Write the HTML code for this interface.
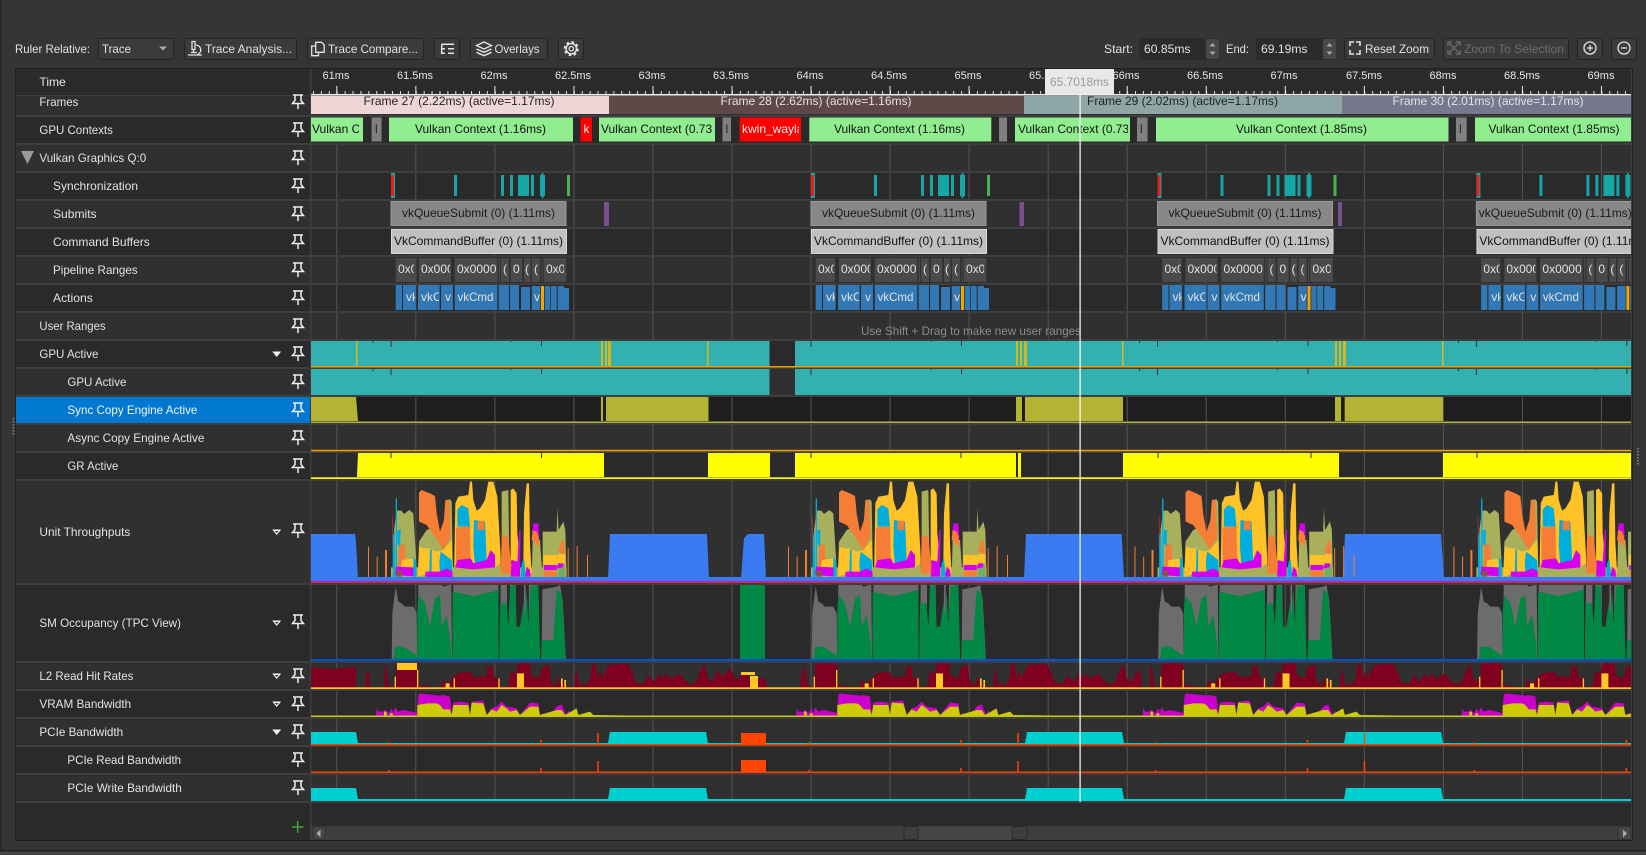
<!DOCTYPE html>
<html lang="en"><head><meta charset="utf-8"><title>Nsight Graphics Trace</title>
<style>
html,body{margin:0;padding:0;background:#353535;width:1646px;height:855px;overflow:hidden}
svg{display:block}
text{font-family:"Liberation Sans",sans-serif;font-size:12px;fill:#e2e2e2}
.d{fill:#111}.b{fill:#eee}.w{fill:#ddd}
.r{font-size:11px;fill:#e8e8e8;text-anchor:middle}
</style></head><body>
<svg xmlns="http://www.w3.org/2000/svg" width="1646" height="855" viewBox="0 0 1646 855">
<defs>
<g id="pin" fill="none" stroke="#eee" stroke-width="1.500"><path d="M-5-7H5M-3-7V-1.500L-5.500 1.500H5.500L3-1.500V-7M0 1.500V7"/></g>
<g id="tri"><path d="M-4.500-2.500H4.500L0 3Z" fill="#eee"/></g>
<g id="tro"><path d="M-4.500-2.500H4.500L0 3Z" fill="#eee"/><path d="M-1.800-1H1.800L0 1Z" fill="#2c2c2c"/></g>
<g id="not"><path d="M373 341v2M391 341v6M541.500 341v5M511 341v1" stroke="#333" fill="none"/></g>
<g id="syn">
<rect x="391" y="173" width="4" height="25" fill="#17a5a5"/><rect x="391" y="175" width="3" height="21" fill="#e52222"/>
<path d="M454 175h3v21h-3zM501 175h3v21h-3zM510 175h3v21h-3zM518 175h11v21h-11zM531 175h3v21h-3zM540 175h5v21h-5zM541.500 173h2v25h-2z" fill="#17a5a5"/>
<rect x="567" y="175" width="3" height="21" fill="#4caf50"/>
</g>
<g id="box">
<rect x="391" y="201.500" width="175" height="24" fill="#888" stroke="#9a9a9a"/>
<rect x="391.500" y="229.500" width="175" height="24" fill="#c0c0c0" stroke="#d8d8d8"/>
<path d="M395.700 258h19.300v24h-19.300zM419 258h32v24h-32zM454.700 258h42.600v24h-42.600zM498.700 258h1.300v24h-1.300zM501 258h8v24h-8zM510.700 258h11.600v24h-11.600zM524 258h6.700v24h-6.700zM532 258h8v24h-8zM541.500 258h1v24h-1zM543.700 258h22.600v24h-22.600z" fill="#4a4a4a"/>
<path d="M395.700 285h6.300v25h-6.300zM403 285h12.700v25h-12.700zM418 285h21.700v25h-21.700zM441 285h12v25h-12zM454.700 285h42.600v25h-42.600zM498.700 285h10.300v25h-10.300zM510 285h9v25h-9zM521 287h9v23h-9zM531.700 286h8.600v24h-8.600zM544.700 286h5.300v24h-5.300zM550.700 286h6v24h-6zM557.700 286h6.300v24h-6.300zM564 288h5v22h-5z" fill="#3278b4"/>
<rect x="541" y="286" width="3" height="24" fill="#f5a500"/>
</g>
<g id="ut" transform="translate(380 480) scale(.33333)">
<rect x="33" y="262" width="527" height="38" fill="#a8b05c"/>
<g fill="#f57d35"><rect x="-36" y="200" width="3" height="100"/><rect x="-10" y="230" width="3" height="70"/><rect x="563" y="205" width="3" height="90"/><rect x="590" y="198" width="3" height="95"/><rect x="621" y="225" width="3" height="70"/><rect x="15" y="210" width="6" height="90"/></g>
<polygon fill="#a8b05c" points="38,300 42,150 50,92 64,92 72,102 88,90 100,100 106,200 112,300"/>
<rect x="47" y="55" width="4" height="245" fill="#00aede"/>
<polygon fill="#00aede" points="38,300 38,170 44,150 46,300"/><rect x="37" y="110" width="2" height="90" fill="#d03030"/>
<polygon fill="#f57d35" points="55,260 58,190 75,195 78,260"/><polygon fill="#00aede" points="52,150 62,150 60,200 52,190"/>
<polygon fill="#ffc328" points="62,270 66,240 105,235 108,270"/><polygon fill="#d400f0" points="45,285 48,260 100,262 108,290"/>
<rect x="50" y="272" width="15" height="18" fill="#7f5a3c"/><polygon fill="#00aede" points="100,230 108,240 110,290 100,290"/>
<polygon fill="#a8b05c" points="113,300 117,185 140,150 165,140 188,180 196,60 210,58 215,65 218,230 220,300"/>
<polygon fill="#f57d35" points="117,38 125,30 150,40 165,48 170,100 180,155 192,120 197,60 208,60 212,170 190,210 165,170 140,135 117,125"/>
<polygon fill="#ffc328" points="113,290 118,200 135,205 150,205 170,215 190,210 215,180 218,270 150,280"/>
<polygon fill="#00aede" points="150,208 155,208 155,280 148,280"/><polygon fill="#00aede" points="178,245 182,215 215,240 217,275 180,280"/>
<polygon fill="#d400f0" points="135,290 137,275 180,275 200,265 217,275 218,295"/>
<polygon fill="#ffc328" points="222,300 226,70 235,50 265,45 270,5 276,5 280,60 290,92 300,85 315,60 325,5 340,5 352,50 356,120 362,230 362,300"/>
<polygon fill="#00aede" points="232,88 245,75 265,85 270,140 232,140"/><polygon fill="#f57d35" points="228,142 270,140 272,235 228,245"/>
<polygon fill="#00aede" points="282,120 315,125 320,240 285,255 280,200"/><polygon fill="#f57d35" points="292,124 312,122 313,150 292,150"/>
<polygon fill="#d400f0" points="225,262 232,240 272,235 280,250 320,240 332,210 345,225 345,262 280,270"/>
<polygon fill="#a8b05c" points="222,262 280,268 345,262 362,250 362,300 222,300"/>
<polygon fill="#a8b05c" points="365,300 365,35 385,30 388,230 392,300"/><polygon fill="#f57d35" points="362,280 365,165 385,170 392,240 400,280"/>
<polygon fill="#ffc328" points="392,240 392,30 400,25 410,40 412,160 420,240 410,280"/><polygon fill="#d400f0" points="392,290 395,240 412,245 418,150 422,150 420,290"/>
<polygon fill="#ffc328" points="430,240 432,100 440,10 447,10 450,190 455,280 430,290"/><polygon fill="#00aede" points="422,290 425,250 432,235 438,290"/><polygon fill="#d400f0" points="435,290 440,260 450,270 452,290"/>
<polygon fill="#a8b05c" points="455,300 458,180 480,180 488,300"/><polygon fill="#f57d35" points="455,180 458,148 475,150 478,200"/><polygon fill="#d400f0" points="458,150 460,130 475,130 478,175 470,155"/>
<polygon fill="#a8b05c" points="488,300 488,155 530,155 532,85 536,150 550,125 556,150 560,300"/>
<polygon fill="#ffc328" points="490,255 490,225 532,225 532,255"/><polygon fill="#d400f0" points="492,270 492,255 530,255 530,270"/><polygon fill="#f57d35" points="490,290 492,272 530,272 530,290"/>
<polygon fill="#f57d35" points="534,215 545,180 552,185 555,225"/><polygon fill="#ffc328" points="530,250 535,222 555,222 555,250"/><polygon fill="#d400f0" points="530,265 535,250 550,250 550,265"/><polygon fill="#74ae62" points="533,295 535,265 555,260 557,295"/>
</g>
<g id="sm" transform="translate(780 470) scale(.33333)">
<g fill="#6c6c6c">
<polygon points="95,570 97,430 107,350 115,395 125,400 135,410 160,410 170,430 172,570"/>
<polygon points="172,570 175,345 245,345 250,350 268,345 274,345 276,570"/>
<polygon points="278,570 280,345 415,345 415,570"/><polygon points="420,570 422,345 441,345 441,570"/><polygon points="450,570 450,345 467,345 470,570"/>
<polygon points="490,570 492,345 497,345 499,570"/><polygon points="505,570 507,345 535,345 540,570"/><polygon points="545,570 547,358 590,350 600,345 608,390 618,570"/>
</g>
<g fill="#008844">
<polygon points="100,570 105,530 130,530 160,550 170,555 170,570"/>
<polygon points="172,570 172,430 175,375 195,400 210,470 225,385 240,375 245,470 260,435 272,520 275,570"/>
<polygon points="277,570 278,365 340,378 415,360 416,570"/>
<polygon points="418,570 420,400 440,400 445,470 450,350 465,345 470,470 480,470 490,400 495,440 500,360 505,460 512,350 535,345 540,570"/>
<polygon points="543,570 545,510 580,510 590,360 605,370 618,570"/>
</g>
</g>
<g id="l2" transform="translate(780 650) scale(.33333)">
<polygon fill="#80001f" points="70,115 70,55 75,45 80,80 85,110 100,110 104,90 105,50 110,40 170,40 170,100 175,100 180,108 205,108 212,112 240,112 245,85 255,100 265,100 270,85 278,85 282,75 300,67 330,65 332,80 375,80 378,50 395,50 398,80 412,85 415,110 442,110 445,85 450,62 465,70 470,40 508,40 510,75 535,85 540,60 545,50 565,45 568,90 585,110 590,75 600,110 605,85 615,110 640,110 645,50 655,100 660,110 668,95 672,110 688,85 692,45 705,40 708,85 718,60 725,85 735,60 745,45 800,40 815,70 825,100 850,100 860,75 870,85 880,95 895,70 905,85 915,70 930,85 955,70 975,95 990,105 1005,95 1020,60 1030,40 1040,85 1055,95 1070,60 1085,80 1085,115"/>
<path d="M101 115V80h4v35zM168 115V60h4v55zM254 115v-15h12v15zM278 115V85h4v30zM412 115V85h4v30zM468 115V70h21v45zM600 115V85h5v30zM610 115V90h5v25z" fill="#ffc820"/>
</g>
<g id="vr" transform="translate(780 650) scale(.33333)">
<polygon fill="#cc00cc" points="48,200 50,175 56,185 70,185 75,178 85,190 95,175 100,190 105,172 115,185 130,180 165,187 170,190 175,135 180,130 240,137 250,135 270,140 275,190 280,158 300,155 325,158 330,195 335,155 370,152 380,195 395,175 410,170 425,155 440,170 470,175 480,195 510,158 535,160 540,195 550,190 570,195 590,170 605,163 612,180 620,195 625,180 630,200"/>
<polygon fill="#cccc00" points="172,200 172,165 200,160 230,160 240,165 250,178 270,178 275,195 280,165 325,165 330,195 335,158 370,160 380,195 395,178 410,185 425,165 440,175 450,185 470,180 480,195 510,170 535,170 540,195 590,180 605,180 615,195 650,175 655,195 690,185 700,195 850,197 850,200"/>
<path d="M72 200v-15h8v15zM90 200v-10h8v10z" fill="#cccc00"/>
</g>
<g id="sp"><path d="M809 745v-3M961 745v-5M1018 745v-12" stroke="#ff4500" fill="none" stroke-width="1.500"/></g>
</defs>

<rect width="1646" height="855" fill="#353535"/>
<rect width="1.500" height="850" fill="#262626"/>
<rect y="850" width="1646" height="1.500" fill="#222"/><rect y="851.500" width="1646" height="4" fill="#444"/>

<!-- toolbar -->
<text x="15" y="53" textLength="75" lengthAdjust="spacingAndGlyphs">Ruler Relative:</text>
<g fill="#3b3b3b" stroke="#242424">
<rect x="98.500" y="38.500" width="75" height="21" rx="2"/>
<rect x="184.500" y="38.500" width="112" height="21" rx="2"/>
<rect x="307.500" y="38.500" width="116" height="21" rx="2"/>
<rect x="434.500" y="38.500" width="25" height="21" rx="2"/>
<rect x="470.500" y="38.500" width="77" height="21" rx="2"/>
<rect x="558.500" y="38.500" width="25" height="21" rx="2"/>
<rect x="1344.500" y="38.500" width="90" height="21" rx="2"/>
<rect x="1443.500" y="38.500" width="125" height="21" rx="2"/>
<rect x="1577.500" y="38.500" width="25" height="21" rx="2"/>
<rect x="1611.500" y="38.500" width="25" height="21" rx="2"/>
</g>
<text x="102" y="53" textLength="29" lengthAdjust="spacingAndGlyphs">Trace</text><path d="M159 46.500h8l-4 4z" fill="#aaa"/>
<g fill="none" stroke="#e4e4e4" stroke-width="1.300">
<path d="M188 55h14M192 41.500h3v8h-3zM196 45c4 .5 6 4.500 4 7.500-.5 1-1.500 1.500-2.500 2.500M191 52.500h6M193.500 49.500v3"/>
<path d="M315.700 42.300h6l2.500 2.500v7.500h-8.500zM315 46h-3.300v9.700h6.800v-3"/>
<path d="M441.700 44.200H454M441.700 44.200V53.300H445M441.700 48.700H445M448 48.700h6M448 53.300h6" stroke-width="1.500"/>
<path d="M484 42l7.500 3.500-7.500 3.500-7.500-3.500zM476.500 49l7.500 3.300 7.500-3.300M476.500 52.300l7.500 3.400 7.500-3.400" stroke-width="1.400"/>
<circle cx="571.300" cy="48.700" r="5.200" stroke-width="1.500"/><circle cx="571.300" cy="48.700" r="6.700" stroke-width="1.700" stroke-dasharray="2.630 2.630"/><circle cx="571.300" cy="48.700" r="2.200" stroke-width="1.300"/>
<path d="M1350 46v-4h4M1356 42h4v4M1360 50v4h-4M1354 54h-4v-4" stroke-width="1.600"/>
<circle cx="1590" cy="48" r="6"/><path d="M1590 45v6M1587 48h6"/>
<circle cx="1624" cy="48" r="6"/><path d="M1621 48h6"/>
</g>
<g fill="none" stroke="#666" stroke-width="1.500"><path d="M1448 46v-4h4M1456 42h4v4M1460 50v4h-4M1452 54h-4v-4M1449 43l10 10M1459 43l-10 10"/></g>
<text x="205" y="53" textLength="87" lengthAdjust="spacingAndGlyphs">Trace Analysis...</text>
<text x="328" y="53" textLength="90" lengthAdjust="spacingAndGlyphs">Trace Compare...</text>
<text x="494.500" y="53" textLength="45" lengthAdjust="spacingAndGlyphs">Overlays</text>
<text x="1104" y="53" textLength="29" lengthAdjust="spacingAndGlyphs">Start:</text>
<rect x="1139" y="38" width="80" height="22" rx="3" fill="#2b2b2b"/><rect x="1206" y="39" width="13" height="20" rx="2" fill="#484848"/>
<path d="M1209.500 46.500l3-3.500 3 3.500zM1209.500 51.500l3 3.500 3-3.500z" fill="#aaa"/>
<text x="1144" y="53" textLength="46.500" lengthAdjust="spacingAndGlyphs">60.85ms</text>
<text x="1226" y="53" textLength="23" lengthAdjust="spacingAndGlyphs">End:</text>
<rect x="1256" y="38" width="80" height="22" rx="3" fill="#2b2b2b"/><rect x="1323" y="39" width="13" height="20" rx="2" fill="#484848"/>
<path d="M1326.500 46.500l3-3.500 3 3.500zM1326.500 51.500l3 3.500 3-3.500z" fill="#aaa"/>
<text x="1261" y="53" textLength="46.500" lengthAdjust="spacingAndGlyphs">69.19ms</text>
<text x="1365" y="53" textLength="64" lengthAdjust="spacingAndGlyphs">Reset Zoom</text>
<text x="1464" y="53" textLength="100" lengthAdjust="spacingAndGlyphs" style="fill:#6e6e6e">Zoom To Selection</text>

<!-- panel -->
<rect x="15.500" y="68.500" width="1617" height="772" fill="#3e3e3e" stroke="#1f1f1f"/>
<rect x="16" y="69" width="1615" height="26" fill="#2b2b2b"/>
<g fill="#303030"><rect x="16" y="96" width="1615" height="19"/><rect x="16" y="145" width="1615" height="26"/><rect x="16" y="201" width="1615" height="26"/><rect x="16" y="257" width="1615" height="26"/><rect x="16" y="313" width="1615" height="26"/><rect x="16" y="369" width="1615" height="26"/><rect x="16" y="425" width="1615" height="26"/><rect x="16" y="481" width="1615" height="102"/><rect x="16" y="663" width="1615" height="26"/><rect x="16" y="719" width="1615" height="26"/><rect x="16" y="775" width="1615" height="26"/></g>
<g fill="#2a2a2a"><rect x="16" y="117" width="1615" height="26"/><rect x="16" y="173" width="1615" height="26"/><rect x="16" y="229" width="1615" height="26"/><rect x="16" y="285" width="1615" height="26"/><rect x="16" y="341" width="1615" height="26"/><rect x="16" y="397" width="1615" height="26"/><rect x="16" y="453" width="1615" height="26"/><rect x="16" y="585" width="1615" height="76"/><rect x="16" y="691" width="1615" height="26"/><rect x="16" y="747" width="1615" height="26"/><rect x="16" y="803" width="1615" height="37"/></g>
<rect x="16" y="397" width="294" height="26" fill="#0078d0"/>
<rect x="311" y="397" width="1320" height="26" fill="#1e1e1e"/>
<rect x="310" y="69" width="1.500" height="771" fill="#3e3e3e"/>
<line x1="336.300" x2="1631" y1="473" y2="473" stroke="#555" stroke-width="656" stroke-dasharray="1 78.040"/>
<path d="M311 144H1631M311 172H1631M311 200H1631M311 228H1631M311 256H1631M311 284H1631M311 312H1631M311 340H1631M311 368H1631M311 396H1631M311 424H1631M311 452H1631M311 480H1631M311 584H1631M311 662H1631M311 690H1631M311 718H1631M311 746H1631M311 774H1631M311 802H1631" stroke="#3e3e3e" stroke-width="2" fill="none"/>

<!-- ruler -->
<rect x="311" y="94" width="1320" height="1.500" fill="#f0f0f0"/>
<line x1="313" x2="1631" y1="92.500" y2="92.500" stroke="#ddd" stroke-width="3" stroke-dasharray="1 6.904"/>
<line x1="336.300" x2="1631" y1="90" y2="90" stroke="#eee" stroke-width="8" stroke-dasharray="1 78.040"/>
<text class="r" x="336" y="79">61ms</text><text class="r" x="415" y="79">61.5ms</text><text class="r" x="494" y="79">62ms</text><text class="r" x="573" y="79">62.5ms</text><text class="r" x="652" y="79">63ms</text><text class="r" x="731" y="79">63.5ms</text><text class="r" x="810" y="79">64ms</text><text class="r" x="889" y="79">64.5ms</text><text class="r" x="968" y="79">65ms</text><text class="r" x="1047" y="79">65.5ms</text><text class="r" x="1126" y="79">66ms</text><text class="r" x="1205" y="79">66.5ms</text><text class="r" x="1284" y="79">67ms</text><text class="r" x="1364" y="79">67.5ms</text><text class="r" x="1443" y="79">68ms</text><text class="r" x="1522" y="79">68.5ms</text><text class="r" x="1601" y="79">69ms</text>

<!-- tree labels -->
<g>
<text x="39.400" y="86" textLength="26.400" lengthAdjust="spacingAndGlyphs">Time</text>
<text x="39.400" y="106" textLength="39" lengthAdjust="spacingAndGlyphs">Frames</text>
<text x="39.400" y="134" textLength="73.500" lengthAdjust="spacingAndGlyphs">GPU Contexts</text>
<text x="39.400" y="162" textLength="106.800" lengthAdjust="spacingAndGlyphs">Vulkan Graphics Q:0</text>
<text x="53" y="190" textLength="85" lengthAdjust="spacingAndGlyphs">Synchronization</text>
<text x="53" y="218" textLength="43.600" lengthAdjust="spacingAndGlyphs">Submits</text>
<text x="53" y="246" textLength="96.800" lengthAdjust="spacingAndGlyphs">Command Buffers</text>
<text x="53" y="274" textLength="84.600" lengthAdjust="spacingAndGlyphs">Pipeline Ranges</text>
<text x="53" y="302" textLength="39.800" lengthAdjust="spacingAndGlyphs">Actions</text>
<text x="39.400" y="330" textLength="66.200" lengthAdjust="spacingAndGlyphs">User Ranges</text>
<text x="39.400" y="358" textLength="59" lengthAdjust="spacingAndGlyphs">GPU Active</text>
<text x="67.400" y="386" textLength="59" lengthAdjust="spacingAndGlyphs">GPU Active</text>
<text x="67.400" y="414" textLength="130" lengthAdjust="spacingAndGlyphs" style="fill:#f4f4f4">Sync Copy Engine Active</text>
<text x="67.400" y="442" textLength="137" lengthAdjust="spacingAndGlyphs">Async Copy Engine Active</text>
<text x="67.400" y="470" textLength="51" lengthAdjust="spacingAndGlyphs">GR Active</text>
<text x="39.400" y="536" textLength="91" lengthAdjust="spacingAndGlyphs">Unit Throughputs</text>
<text x="39.400" y="627" textLength="141.600" lengthAdjust="spacingAndGlyphs">SM Occupancy (TPC View)</text>
<text x="39.400" y="680" textLength="94" lengthAdjust="spacingAndGlyphs">L2 Read Hit Rates</text>
<text x="39.400" y="708" textLength="91.800" lengthAdjust="spacingAndGlyphs">VRAM Bandwidth</text>
<text x="39.400" y="736" textLength="83.800" lengthAdjust="spacingAndGlyphs">PCIe Bandwidth</text>
<text x="67.400" y="764" textLength="113.700" lengthAdjust="spacingAndGlyphs">PCIe Read Bandwidth</text>
<text x="67.400" y="792" textLength="114.400" lengthAdjust="spacingAndGlyphs">PCIe Write Bandwidth</text>
</g>
<path d="M21 151H34L27.500 164Z" fill="#9a9a9a"/>
<use href="#pin" x="298" y="102"/><use href="#pin" x="298" y="130"/><use href="#pin" x="298" y="158"/><use href="#pin" x="298" y="186"/><use href="#pin" x="298" y="214"/><use href="#pin" x="298" y="242"/><use href="#pin" x="298" y="270"/><use href="#pin" x="298" y="298"/><use href="#pin" x="298" y="326"/><use href="#pin" x="298" y="354"/><use href="#pin" x="298" y="382"/><use href="#pin" x="298" y="410"/><use href="#pin" x="298" y="438"/><use href="#pin" x="298" y="466"/><use href="#pin" x="298" y="531"/><use href="#pin" x="298" y="622"/><use href="#pin" x="298" y="676"/><use href="#pin" x="298" y="704"/><use href="#pin" x="298" y="732"/><use href="#pin" x="298" y="760"/><use href="#pin" x="298" y="788"/>
<use href="#tri" x="276.700" y="354"/><use href="#tro" x="276.700" y="532"/><use href="#tro" x="276.700" y="623"/><use href="#tro" x="276.700" y="676"/><use href="#tro" x="276.700" y="704"/><use href="#tri" x="276.700" y="732"/>
<path d="M292 827h11.500M297.700 821v12" stroke="#3fa535" stroke-width="1.500" fill="none"/>
<path d="M13.500 418v18" stroke="#777" stroke-width="2" stroke-dasharray="1.500 1.500"/><path d="M1638 448v18" stroke="#777" stroke-width="2" stroke-dasharray="1.500 1.500"/>

<!-- timeline content -->
<svg x="311" y="96" width="1320" height="744" viewBox="311 96 1320 744">
<!-- frames -->
<rect x="311" y="96" width="298" height="18" fill="#eed6d6"/><rect x="609" y="96" width="415" height="18" fill="#5e4848"/><rect x="1024" y="96" width="318" height="18" fill="#8fa6a6"/><rect x="1342" y="96" width="290" height="18" fill="#77778e"/>
<text class="d" x="363.500" y="105" textLength="191" lengthAdjust="spacingAndGlyphs" style="fill:#222">Frame 27 (2.22ms) (active=1.17ms)</text>
<text x="720.500" y="105" textLength="191" lengthAdjust="spacingAndGlyphs">Frame 28 (2.62ms) (active=1.16ms)</text>
<text x="1087" y="105" textLength="191" lengthAdjust="spacingAndGlyphs" style="fill:#222">Frame 29 (2.02ms) (active=1.17ms)</text>
<text x="1392.500" y="105" textLength="191" lengthAdjust="spacingAndGlyphs">Frame 30 (2.01ms) (active=1.17ms)</text>
<!-- contexts -->
<g fill="#90ee90"><rect x="311" y="117.500" width="52" height="24"/><rect x="389" y="117.500" width="184" height="24"/><rect x="599" y="117.500" width="116" height="24"/><rect x="809.300" y="117.500" width="182" height="24"/><rect x="1015" y="117.500" width="115" height="24"/><rect x="1156" y="117.500" width="292.500" height="24"/><rect x="1475" y="117.500" width="157" height="24"/></g>
<g fill="#808080"><rect x="371.600" y="117.500" width="10" height="24"/><rect x="722.500" y="117.500" width="8.500" height="24"/><rect x="999" y="117.500" width="8" height="24"/><rect x="1137" y="117.500" width="10.600" height="24"/><rect x="1456" y="117.500" width="10.700" height="24"/></g>
<g fill="#ff0000"><rect x="580.500" y="117.500" width="11.500" height="24"/><rect x="739.700" y="117.500" width="61.300" height="24"/></g>
<svg x="312" y="118" width="47" height="24"><text class="d" x="0" y="15">Vulkan Context</text></svg>
<text class="d" x="375" y="133" style="fill:#222">l</text><text class="d" x="725.500" y="133" style="fill:#222">l</text><text class="d" x="1140" y="133" style="fill:#222">l</text><text class="d" x="1459" y="133" style="fill:#222">l</text>
<text class="d" x="415" y="133" textLength="131" lengthAdjust="spacingAndGlyphs">Vulkan Context (1.16ms)</text>
<text class="b" x="583.500" y="133">k</text>
<svg x="601" y="118" width="111" height="24"><text class="d" x="0" y="15" textLength="131" lengthAdjust="spacingAndGlyphs">Vulkan Context (0.73ms)</text></svg>
<svg x="742" y="118" width="57" height="24"><text class="b" x="0" y="15">kwin_wayland</text></svg>
<text class="d" x="834" y="133" textLength="131" lengthAdjust="spacingAndGlyphs">Vulkan Context (1.16ms)</text>
<svg x="1018" y="118" width="110" height="24"><text class="d" x="0" y="15" textLength="131" lengthAdjust="spacingAndGlyphs">Vulkan Context (0.73ms)</text></svg>
<text class="d" x="1236" y="133" textLength="131" lengthAdjust="spacingAndGlyphs">Vulkan Context (1.85ms)</text>
<text class="d" x="1488.500" y="133" textLength="131" lengthAdjust="spacingAndGlyphs">Vulkan Context (1.85ms)</text>
<!-- frame pattern shapes -->
<use href="#syn"/><use href="#syn" x="420"/><use href="#syn" x="766.500"/><use href="#syn" x="1085.400"/>
<use href="#box"/><use href="#box" x="420"/><use href="#box" x="766.500"/><use href="#box" x="1085.400"/>
<path d="M604 202h5v24h-5zM1019.500 202h4.500v24h-4.500zM1338 202h4v24h-4z" fill="#7a4f8f"/>
<!-- pattern labels 1 -->
<g>
<text class="d" x="402" y="217" textLength="153" lengthAdjust="spacingAndGlyphs" style="fill:#1a1a1a">vkQueueSubmit (0) (1.11ms)</text>
<text class="d" x="394" y="245" textLength="169" lengthAdjust="spacingAndGlyphs">VkCommandBuffer (0) (1.11ms)</text>
<svg x="398" y="258" width="16" height="24"><text x="0" y="15">0x000</text></svg>
<svg x="421" y="258" width="29" height="24"><text x="0" y="15">0x0000</text></svg>
<svg x="457" y="258" width="39" height="24"><text x="0" y="15">0x00000</text></svg>
<text x="503" y="273">(</text><text x="513" y="273">0</text><text x="525" y="273">(</text><text x="534" y="273">(</text>
<svg x="546" y="258" width="18" height="24"><text x="0" y="15">0x000</text></svg>
<svg x="406" y="285" width="9" height="25"><text x="0" y="16">vkCmd</text></svg>
<svg x="421" y="285" width="18" height="25"><text x="0" y="16">vkCmd</text></svg>
<text x="445" y="301">v</text>
<text x="457.500" y="301" textLength="36" lengthAdjust="spacingAndGlyphs">vkCmd</text>
<text x="534" y="301">v</text>
</g>
<!-- pattern labels 2 -->
<g transform="translate(420)">
<text class="d" x="402" y="217" textLength="153" lengthAdjust="spacingAndGlyphs" style="fill:#1a1a1a">vkQueueSubmit (0) (1.11ms)</text>
<text class="d" x="394" y="245" textLength="169" lengthAdjust="spacingAndGlyphs">VkCommandBuffer (0) (1.11ms)</text>
<svg x="398" y="258" width="16" height="24"><text x="0" y="15">0x000</text></svg>
<svg x="421" y="258" width="29" height="24"><text x="0" y="15">0x0000</text></svg>
<svg x="457" y="258" width="39" height="24"><text x="0" y="15">0x00000</text></svg>
<text x="503" y="273">(</text><text x="513" y="273">0</text><text x="525" y="273">(</text><text x="534" y="273">(</text>
<svg x="546" y="258" width="18" height="24"><text x="0" y="15">0x000</text></svg>
<svg x="406" y="285" width="9" height="25"><text x="0" y="16">vkCmd</text></svg>
<svg x="421" y="285" width="18" height="25"><text x="0" y="16">vkCmd</text></svg>
<text x="445" y="301">v</text>
<text x="457.500" y="301" textLength="36" lengthAdjust="spacingAndGlyphs">vkCmd</text>
<text x="534" y="301">v</text>
</g>
<!-- pattern labels 3 -->
<g transform="translate(766.500)">
<text class="d" x="402" y="217" textLength="153" lengthAdjust="spacingAndGlyphs" style="fill:#1a1a1a">vkQueueSubmit (0) (1.11ms)</text>
<text class="d" x="394" y="245" textLength="169" lengthAdjust="spacingAndGlyphs">VkCommandBuffer (0) (1.11ms)</text>
<svg x="398" y="258" width="16" height="24"><text x="0" y="15">0x000</text></svg>
<svg x="421" y="258" width="29" height="24"><text x="0" y="15">0x0000</text></svg>
<svg x="457" y="258" width="39" height="24"><text x="0" y="15">0x00000</text></svg>
<text x="503" y="273">(</text><text x="513" y="273">0</text><text x="525" y="273">(</text><text x="534" y="273">(</text>
<svg x="546" y="258" width="18" height="24"><text x="0" y="15">0x000</text></svg>
<svg x="406" y="285" width="9" height="25"><text x="0" y="16">vkCmd</text></svg>
<svg x="421" y="285" width="18" height="25"><text x="0" y="16">vkCmd</text></svg>
<text x="445" y="301">v</text>
<text x="457.500" y="301" textLength="36" lengthAdjust="spacingAndGlyphs">vkCmd</text>
<text x="534" y="301">v</text>
</g>
<!-- pattern labels 4 -->
<g transform="translate(1085.400)">
<text class="d" x="393.400" y="217" textLength="153" lengthAdjust="spacingAndGlyphs" style="fill:#1a1a1a">vkQueueSubmit (0) (1.11ms)</text>
<text class="d" x="394" y="245" textLength="169" lengthAdjust="spacingAndGlyphs">VkCommandBuffer (0) (1.11ms)</text>
<svg x="398" y="258" width="16" height="24"><text x="0" y="15">0x000</text></svg>
<svg x="421" y="258" width="29" height="24"><text x="0" y="15">0x0000</text></svg>
<svg x="457" y="258" width="39" height="24"><text x="0" y="15">0x00000</text></svg>
<text x="503" y="273">(</text><text x="513" y="273">0</text><text x="525" y="273">(</text><text x="534" y="273">(</text>
<svg x="406" y="285" width="9" height="25"><text x="0" y="16">vkCmd</text></svg>
<svg x="421" y="285" width="18" height="25"><text x="0" y="16">vkCmd</text></svg>
<text x="445" y="301">v</text>
<text x="457.500" y="301" textLength="36" lengthAdjust="spacingAndGlyphs">vkCmd</text>
</g>
<text x="861" y="335" textLength="220" lengthAdjust="spacingAndGlyphs" style="fill:#8c8c8c">Use Shift + Drag to make new user ranges</text>

<!-- GPU active -->
<path d="M311 341H769.500V366H795V341H1631V366H311ZM311 369H769.500V395H795V369H1631V395H311Z" fill="#33b0b0"/>
<rect x="311" y="366" width="1320" height="1.500" fill="#e8a000"/>
<path d="M356 341h1.500v25H356zM601 341h2v25h-2zM605 341h2v25h-2zM608 341h3v25h-3zM707 341h1.500v25H707zM1016 341h2v25h-2zM1020 341h2v25h-2zM1024 341h3v25h-3zM1122 341h1.500v25H1122zM1335 341h2v25h-2zM1339 341h2v25h-2zM1343 341h3v25h-3zM1442 341h1.500v25H1442z" fill="#d4b820"/>
<use href="#not"/><use href="#not" y="28"/><use href="#not" x="420"/><use href="#not" x="420" y="28"/><use href="#not" x="766.500"/><use href="#not" x="766.500" y="28"/><use href="#not" x="1085.400"/><use href="#not" x="1085.400" y="28"/>
<!-- sync copy -->
<path d="M311 397H356L358 421H311ZM606 397H708.500V421H606ZM1025 397H1123V421H1025ZM1344.700 397H1443V421H1344.700ZM1016 397h6v24h-6zM1335 397h6v24h-6zM601 397h2v24h-2z" fill="#b3b336"/>
<rect x="311" y="421.500" width="1320" height="1.500" fill="#b3b336"/>
<!-- async -->
<rect x="311" y="449.800" width="1320" height="1.500" fill="#f0a000"/>
<!-- GR -->
<path d="M357 477L358 453H604V477ZM708 453H770V477H708ZM795 453H1021V477H795ZM1123 453H1339V477H1123ZM1443 453H1631V477H1443Z" fill="#ffff00"/>
<path d="M391 453v5M541.500 453v5M811 453v5M961 453v5M1158 453v5M1311 453v5M1477 453v5" stroke="#2a2a2a"/>
<rect x="311" y="477.300" width="1320" height="1.700" fill="#ffff00"/>
<rect x="1016" y="453" width="2" height="24" fill="#2a2a2a"/>
<!-- unit throughput -->
<g fill="#3b7bf2"><polygon points="311,534 355,534 356,542 358,579 311,579"/><polygon points="610,534 707,534 709,579 608,579"/><polygon points="744,538 748,534 764,534 766,579 741,579"/><polygon points="1026,534 1121.700,534 1124,579 1024,579"/><polygon points="1345,534 1441,534 1444,579 1343,579"/></g>
<use href="#ut"/><use href="#ut" x="420"/><use href="#ut" x="766.500"/><use href="#ut" x="1085.400"/>
<rect x="311" y="577" width="1320" height="4" fill="#3b7bf2"/>
<rect x="311" y="581" width="1320" height="1" fill="#cc10cc"/><rect x="311" y="582" width="1320" height="1" fill="#d03038"/>
<!-- SM -->
<rect x="740" y="585" width="25" height="75" fill="#008844"/>
<use href="#sm" x="-420"/><use href="#sm"/><use href="#sm" x="346.500"/><use href="#sm" x="665.400"/>
<rect x="311" y="659" width="1320" height="2" fill="#0052d8"/>
<!-- L2 -->
<use href="#l2" x="-419"/><use href="#l2"/><use href="#l2" x="346.500"/><use href="#l2" x="665.400"/>
<polygon fill="#80001f" points="311,689 311,667 330,669 356,667 356,689 365,689 366,672 369,672 370,689 384,689 386,665 388,689"/>
<polygon fill="#80001f" points="722,689 724,675 730,668 736,680 740,676 745,672 750,680 765,678 768,689 800,689 802,670 806,689"/>
<rect x="397" y="663" width="20" height="7" fill="#ffc820"/>
<path d="M741 672h14v3h-14zM750 676h8v12h-8z" fill="#ffc820"/>
<rect x="311" y="687.300" width="1320" height="1.700" fill="#ffc820"/>
<!-- VRAM -->
<use href="#vr" x="-420"/><use href="#vr"/><use href="#vr" x="346.500"/><use href="#vr" x="665.400"/>
<rect x="311" y="715.500" width="1320" height="1.500" fill="#c8c800"/>
<!-- PCIe -->
<g fill="#00cfd0"><path d="M311 732H356L358 743H311ZM610 732H706L708 743H608ZM1027 732H1122L1124 743H1025ZM1346 732H1441L1443 743H1344Z"/>
<rect x="311" y="743" width="1320" height="1"/></g>
<rect x="311" y="744" width="1320" height="1.500" fill="#ff4000"/>
<use href="#sp"/><use href="#sp" x="-420"/><use href="#sp" x="346.500"/><use href="#sp" x="665.400"/>
<rect x="741" y="733" width="25" height="11" fill="#ff4500"/>
<!-- PCIe read -->
<rect x="311" y="771.500" width="1320" height="1.500" fill="#ff4000"/>
<use href="#sp" y="28"/><use href="#sp" x="-420" y="28"/><use href="#sp" x="346.500" y="28"/><use href="#sp" x="665.400" y="28"/>
<rect x="741" y="760" width="25" height="12" fill="#ff4500"/>
<!-- PCIe write -->
<g fill="#00cfd0"><path d="M311 788H356L358 799H311ZM610 788H706L708 799H608ZM1027 788H1122L1124 799H1025ZM1346 788H1441L1443 799H1344Z"/>
<rect x="311" y="799" width="1320" height="2"/></g>
<!-- scrollbar -->
<rect x="311" y="826" width="1320" height="14" fill="#3e3e3e"/>
<rect x="313" y="827" width="12" height="12.500" rx="1" fill="#464646" stroke="#333"/><path d="M320.500 829.500v8l-4-4z" fill="#aaa"/>
<rect x="1618" y="827" width="12.500" height="12.500" rx="1" fill="#464646" stroke="#333"/><path d="M1623 829.500v8l4-4z" fill="#aaa"/>
<rect x="918" y="827" width="94" height="12.500" fill="#454545"/>
<rect x="904" y="826.500" width="14" height="13" rx="2" fill="#3e3e3e" stroke="#2a2a2a"/><rect x="1012" y="826.500" width="15" height="13" rx="2" fill="#3e3e3e" stroke="#2a2a2a"/>
</svg>

<!-- cursor -->
<rect x="1079.500" y="95" width="1.200" height="707" fill="#fff"/>
<rect x="1045" y="69" width="69" height="25" fill="#e8e8e8"/>
<text x="1050" y="86" textLength="59" lengthAdjust="spacingAndGlyphs" style="fill:#999">65.7018ms</text>
</svg>
</body></html>
